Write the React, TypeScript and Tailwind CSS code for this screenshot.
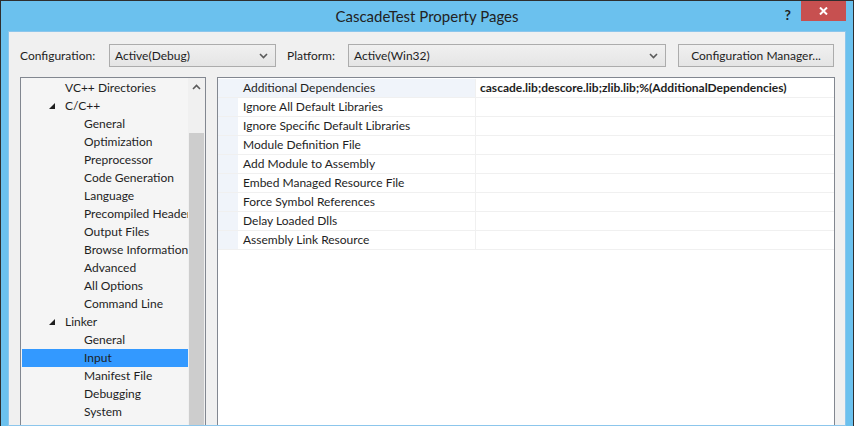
import React from 'react'

const treeItems = [
  { label: "VC++ Directories", level: 0 },
  { label: "C/C++", level: 0, open: true },
  { label: "General", level: 1 },
  { label: "Optimization", level: 1 },
  { label: "Preprocessor", level: 1 },
  { label: "Code Generation", level: 1 },
  { label: "Language", level: 1 },
  { label: "Precompiled Headers", level: 1 },
  { label: "Output Files", level: 1 },
  { label: "Browse Information", level: 1 },
  { label: "Advanced", level: 1 },
  { label: "All Options", level: 1 },
  { label: "Command Line", level: 1 },
  { label: "Linker", level: 0, open: true },
  { label: "General", level: 1 },
  { label: "Input", level: 1, selected: true },
  { label: "Manifest File", level: 1 },
  { label: "Debugging", level: 1 },
  { label: "System", level: 1 },
  { label: "Optimization", level: 1 },
  { label: "Embedded IDL", level: 1 },
]

const props = [
  { name: "Additional Dependencies", value: "cascade.lib;descore.lib;zlib.lib;%(AdditionalDependencies)" },
  { name: "Ignore All Default Libraries", value: "" },
  { name: "Ignore Specific Default Libraries", value: "" },
  { name: "Module Definition File", value: "" },
  { name: "Add Module to Assembly", value: "" },
  { name: "Embed Managed Resource File", value: "" },
  { name: "Force Symbol References", value: "" },
  { name: "Delay Loaded Dlls", value: "" },
  { name: "Assembly Link Resource", value: "" },
]

const Chevron = ({ up }: { up?: boolean }) => (
  <svg width="9" height="6" viewBox="0 0 9 6">
    <path d={up ? "M1 5 L4.5 1.5 L8 5" : "M1 1 L4.5 4.5 L8 1"} stroke="#5a5a5a" strokeWidth="1.6" fill="none" />
  </svg>
)

const Dropdown = ({ text, width }: { text: string; width: string }) => (
  <div className={`${width} h-[23px] flex items-center justify-between pl-[5px] pr-[7px] border border-[#acacac] bg-gradient-to-b from-[#f0f0f0] to-[#e5e5e5]`}>
    <span>{text}</span>
    <Chevron />
  </div>
)

const App = () => {
  return (
    <div className="w-[854px] h-[426px] overflow-hidden bg-[#6bc1ee] border-x border-t border-[#2e2e2e] flex flex-col font-['Lato',sans-serif] text-[12px] text-[#1e1e1e]">
      {/* title bar */}
      <div className="relative h-[30px] shrink-0 flex items-center justify-center">
        <span className="text-[15px] text-[#222] mt-[1px]">CascadeTest Property Pages</span>
        <span className="absolute right-[62px] top-[3px] text-[14px] font-bold text-[#222]">?</span>
        <div className="absolute right-[7px] top-0 w-[45px] h-[20px] bg-[#c75050] flex items-center justify-center">
          <svg width="9" height="8" viewBox="0 0 9 8">
            <path d="M1 0.5 L8 7.5 M8 0.5 L1 7.5" stroke="#fff" strokeWidth="2" />
          </svg>
        </div>
      </div>

      {/* client */}
      <div className="mx-[7px] flex-1 overflow-hidden bg-[#f0f0f0] border border-[#8cc6ec] pt-[12px] pl-[11px]">
        <div className="flex items-center h-[23px]">
          <span className="w-[89px]">Configuration:</span>
          <Dropdown text="Active(Debug)" width="w-[167px]" />
          <span className="w-[61px] ml-[11px]">Platform:</span>
          <Dropdown text="Active(Win32)" width="w-[318px]" />
          <div className="ml-[12px] w-[156px] h-[23px] flex items-center justify-center border border-[#acacac] bg-gradient-to-b from-[#f0f0f0] to-[#e5e5e5]">
            Configuration Manager...
          </div>
        </div>

        <div className="flex mt-[10px]">
          {/* tree */}
          <div className="w-[186px] h-[380px] border border-[#828790] bg-[#f5f5f5] flex">
            <div className="w-[167px] pt-[1px] overflow-hidden">
              {treeItems.map((item, i) => (
                <div
                  key={i}
                  className={`h-[18px] flex items-center whitespace-nowrap ${item.selected ? 'bg-[#3399ff] ml-[1px]' : ''}`}
                >
                  {item.level === 0 ? (
                    <div className="flex items-center">
                      <span className="w-[44px] flex justify-end pr-[10px]">
                        {item.open && (
                          <svg width="6" height="6" viewBox="0 0 6 6">
                            <path d="M6 0 L6 6 L0 6 Z" fill="#1e1e1e" />
                          </svg>
                        )}
                      </span>
                      <span>{item.label}</span>
                    </div>
                  ) : (
                    <span className={item.selected ? 'pl-[62px]' : 'pl-[63px]'}>{item.label}</span>
                  )}
                </div>
              ))}
            </div>
            <div className="w-[17px] bg-[#f0f0f0] flex flex-col">
              <div className="h-[18px] flex items-center justify-center">
                <Chevron up />
              </div>
              <div className="h-[37px]" />
              <div className="flex-1 mx-[1px] bg-[#cdcdcd]" />
            </div>
          </div>

          {/* property grid */}
          <div className="ml-[11px] w-[618px] h-[380px] border border-[#828790] bg-white pt-[1px]">
            {props.map((p, i) => (
              <div key={i} className="flex h-[19px] border-b border-[#f0f0f0]">
                <div className="w-[20px] bg-[#f0f4fa]" />
                <div className={`w-[238px] pl-[5px] flex items-center border-r border-[#f0f0f0] ${i === 0 ? 'bg-[#f0f4fa]' : ''}`}>
                  {p.name}
                </div>
                <div className="flex-1 pl-[4px] flex items-center font-bold whitespace-nowrap">
                  {p.value}
                </div>
              </div>
            ))}
          </div>
        </div>
      </div>
    </div>
  )
}

export default App
